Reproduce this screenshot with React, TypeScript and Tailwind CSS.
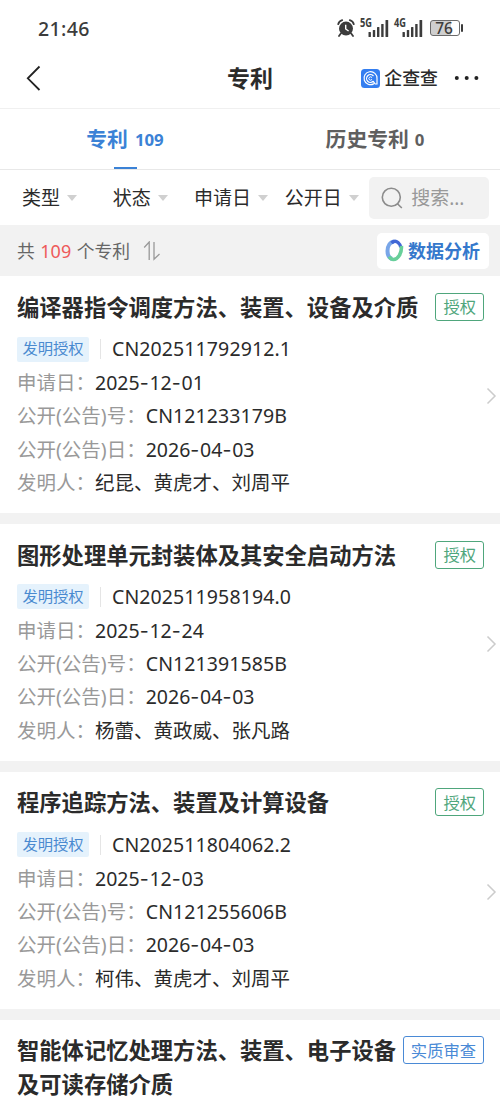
type Patent = {
  title: string
  status: string
  kind?: string
  applyNo?: string
  applyDate?: string
  publishNo?: string
  publishDate?: string
  inventors?: string
}

const FILTERS = ['类型', '状态', '申请日', '公开日']

const PATENTS: Patent[] = [
  {
    title: '编译器指令调度方法、装置、设备及介质',
    status: '授权',
    kind: '发明授权',
    applyNo: 'CN202511792912.1',
    applyDate: '2025-12-01',
    publishNo: 'CN121233179B',
    publishDate: '2026-04-03',
    inventors: '纪昆、黄虎才、刘周平',
  },
  {
    title: '图形处理单元封装体及其安全启动方法',
    status: '授权',
    kind: '发明授权',
    applyNo: 'CN202511958194.0',
    applyDate: '2025-12-24',
    publishNo: 'CN121391585B',
    publishDate: '2026-04-03',
    inventors: '杨蕾、黄政威、张凡路',
  },
  {
    title: '程序追踪方法、装置及计算设备',
    status: '授权',
    kind: '发明授权',
    applyNo: 'CN202511804062.2',
    applyDate: '2025-12-03',
    publishNo: 'CN121255606B',
    publishDate: '2026-04-03',
    inventors: '柯伟、黄虎才、刘周平',
  },
  {
    title: '智能体记忆处理方法、装置、电子设备及可读存储介质',
    status: '实质审查',
  },
]

function Signal({ label }: { label: string }) {
  return (
    <svg width="29" height="20" viewBox="0 0 29 20" fill="#3c3c3c" className="overflow-visible">
      <text x="0" y="9.3" fontSize="11.5" fontWeight="700" textLength="12" lengthAdjust="spacingAndGlyphs">
        {label}
      </text>
      <rect x="8.5" y="14" width="2.4" height="5" rx=".5" />
      <rect x="12.8" y="12" width="2.4" height="7" rx=".5" />
      <rect x="17" y="9" width="2.4" height="10" rx=".5" />
      <rect x="21.2" y="6" width="2.4" height="13" rx=".5" />
      <rect x="25.5" y="2" width="2.7" height="17" rx=".5" />
    </svg>
  )
}

function StatusBar() {
  return (
    <div className="flex h-14 items-center justify-between pl-[38px] pr-[37px] text-[#3c3c3c]">
      <span className="pt-[2px] text-[19.5px] font-medium tracking-[0.4px]">21:46</span>
      <div className="flex items-center">
        <svg width="18" height="18" viewBox="0 0 18 18" className="mr-[5px]">
          <circle cx="9" cy="9.6" r="7" fill="#3c3c3c" />
          <path d="M1.2 5.2 Q2 2 5.2 1.2M16.8 5.2Q16 2 12.8 1.2M3.8 14.5 2 17M14.2 14.5 16 17" fill="none" stroke="#3c3c3c" strokeWidth="1.8" strokeLinecap="round" />
          <path d="M8.7 5.8V10L11.6 12" fill="none" stroke="#fff" strokeWidth="1.4" />
        </svg>
        <div className="mr-[5px] flex"><Signal label="5G" /></div>
        <div className="mr-[7px] flex"><Signal label="4G" /></div>
        <div className="flex items-center gap-px">
          <div className="flex h-4 w-[30px] items-center justify-center rounded-[3px] border border-[#6a6a6a] bg-linear-to-r from-[#cfcfcf] from-70% to-white to-70% pr-[2px] text-[15.5px] font-medium leading-4">
            76
          </div>
          <div className="h-2 w-[2px] rounded-sm bg-[#3c3c3c]" />
        </div>
      </div>
    </div>
  )
}

function Header() {
  return (
    <header className="flex h-[53px] items-center border-b border-[#f0f0f0] pb-2 pl-[26px] pr-[21px]">
      <div className="flex flex-1">
        <svg width="16" height="26" viewBox="0 0 16 26" fill="none" stroke="#222" strokeWidth="1.8">
          <path d="M13.5 1.5 1.8 13.3 13.5 25" />
        </svg>
      </div>
      <h1 className="mr-[5px] pt-px text-[23px] font-bold leading-none">专利</h1>
      <div className="flex flex-1 items-center justify-end">
        <svg width="19" height="19" viewBox="0 0 19 19" className="mr-1">
          <rect width="19" height="19" rx="3.5" fill="#347ef0" />
          <g fill="none" stroke="#fff" strokeLinecap="round">
            <path d="M12.6 14.9A6.5 6.5 0 1 1 16 9.5V15H14.2L12.4 12.6" strokeWidth="1.2" />
            <path d="M12.2 6.7A3.9 3.9 0 1 0 12.2 12.3" strokeWidth="1.2" />
            <path d="M10.8 8.3A1.7 1.7 0 1 0 10.8 10.7" strokeWidth="1" />
          </g>
        </svg>
        <span className="pt-[2px] text-[17.9px] font-medium leading-none">企查查</span>
        <svg width="25" height="6" viewBox="0 0 25 6" fill="#222" className="ml-4">
          <circle cx="2.8" cy="3" r="2" />
          <circle cx="12.7" cy="3" r="2" />
          <circle cx="22.4" cy="3" r="2" />
        </svg>
      </div>
    </header>
  )
}

function Tabs() {
  return (
    <div className="flex h-[61px] border-b border-[#e8e8e8] font-bold">
      <div className="relative flex flex-1 items-center justify-center pt-[2px] text-[#3b82d6]">
        <p className="flex items-center text-[20.8px]">专利<span className="mb-px ml-[7px] text-[16.8px]">109</span></p>
        <span className="absolute bottom-0 h-[2.5px] w-[23px] bg-[#3b82d6]" />
      </div>
      <div className="flex flex-1 items-center justify-center pt-[2px] text-[#5f5f5f]">
        <p className="flex items-center text-[20.8px]">历史专利<span className="mb-px ml-[6px] text-[16.8px]">0</span></p>
      </div>
    </div>
  )
}

function FilterBar() {
  return (
    <div className="flex h-[55px] items-center pl-1 pr-[11px]">
      {FILTERS.map(name => (
        <button key={name} className="flex w-[90.8px] items-center justify-center gap-[7px] text-[19px]">
          <span className="pt-[2px]">{name}</span>
          <svg width="10" height="6" viewBox="0 0 10 6" fill="#d0d0d0">
            <path d="M0 0H10L5 6Z" />
          </svg>
        </button>
      ))}
      <div className="ml-[2px] flex h-[42px] flex-1 items-center rounded-[5px] bg-[#f2f2f2] pl-3 text-[19px] text-[#999]">
        <svg width="22" height="22" viewBox="0 0 22 22" fill="none" stroke="#8c8c8c" strokeWidth="1.6" className="mr-2">
          <circle cx="10.3" cy="10.3" r="9" />
          <path d="M16.5 16.8 20.8 21" />
        </svg>
        <span className="pt-[2px]">搜索...</span>
      </div>
    </div>
  )
}

function CountBar() {
  return (
    <div className="flex h-[51px] items-center bg-[#f2f2f2] pl-[17px] pr-[11px]">
      <p className="pt-px text-[17.8px] text-[#666]">
        共<span className="mx-[5.5px] text-[18px] text-[#ee5a5a]">109</span>个专利
      </p>
      <svg width="18" height="20" viewBox="0 0 18 20" fill="none" stroke="#999" strokeWidth="1.3" className="ml-[13px]">
        <path d="M1.2 6.5 6.2 1V19M11 1V18.3L16.5 13" />
      </svg>
      <button className="ml-auto flex h-9 w-28 items-center rounded-[5px] bg-white pl-2 text-[18px] font-bold text-[#3578cc]">
        <svg width="19" height="23" viewBox="0 0 19 23" fill="none" className="mr-1">
          <path d="M9 2.5C5 3 2.5 7 2.5 12c0 4 1.8 7 4.5 8" stroke="#79a6e8" strokeWidth="4" />
          <path d="M6.5 4C8.5 2 11 1.8 13 3.5c1.5 1.3 2.7 3 2.8 5" stroke="#4168d6" strokeWidth="3.4" />
          <path d="M16.4 7C17 14 13 20.5 8.5 20.5 6.5 20.5 5 19 4.3 17.5" stroke="#68cf9a" strokeWidth="3.6" />
        </svg>
        <span className="pt-px">数据分析</span>
      </button>
    </div>
  )
}

// the hyphen is set in Inter, whose dash is wider
function DateText({ value }: { value: string }) {
  return (
    <>
      {value.split('-').map((part, i) => (
        <span key={i}>
          {i > 0 && <span className="font-[Inter] tracking-[0.8px]">-</span>}
          {part}
        </span>
      ))}
    </>
  )
}

function PatentCard({ patent }: { patent: Patent }) {
  const granted = patent.status === '授权'
  return (
    <article className="relative bg-white pb-[13.6px] pl-[17px] pr-4 pt-[14.6px]">
      <div className="flex h-[33.4px] items-start justify-between">
        <h2 className="-mr-6 w-[402px] text-[22.3px] font-bold leading-[33.4px]">
          {granted ? patent.title : <span className="block w-[382px]">{patent.title}</span>}
        </h2>
        <span
          className={`mt-[2px] flex h-7 shrink-0 items-center rounded-[3px] border px-[7px] pt-px text-[16.3px] ${
            granted ? 'border-[#4fa67c] text-[#4fa67c]' : 'border-[#4a8ad6] text-[#4a8ad6]'
          }`}
        >
          {patent.status}
        </span>
      </div>
      {patent.applyNo && (
        <div className="mt-[8.4px] grid auto-rows-[33.4px] text-[19.5px] leading-[33.4px]">
          <div className="flex items-center tracking-[0.1px]">
            <span className="flex h-[25px] w-[72px] items-center justify-center rounded-[2px] bg-[#e5f2fc] text-[15.3px] tracking-normal text-[#4a8ad0]">
              {patent.kind}
            </span>
            <span className="ml-[11px] mr-[11px] h-5 w-px bg-[#e5e5e5]" />
            {patent.applyNo}
          </div>
          <p><span className="text-[#999]">申请日：</span><DateText value={patent.applyDate!} /></p>
          <p><span className="text-[#999]">公开(公告)号：</span><span className="tracking-[0.1px]">{patent.publishNo}</span></p>
          <p><span className="text-[#999]">公开(公告)日：</span><DateText value={patent.publishDate!} /></p>
          <p><span className="text-[#999]">发明人：</span>{patent.inventors}</p>
          <svg width="11" height="18" viewBox="0 0 11 18" fill="none" stroke="#ccc" strokeWidth="1.5" className="absolute right-[3px] top-[111px]">
            <path d="M1.5 1.5 9 9 1.5 16.5" />
          </svg>
        </div>
      )}
    </article>
  )
}

export default function App() {
  return (
    <div className="h-[1099px] w-[500px] overflow-hidden bg-white font-['Noto_Sans','Noto_Sans_CJK_SC',sans-serif] text-[#2b2b2b]">
      <StatusBar />
      <Header />
      <Tabs />
      <FilterBar />
      <CountBar />
      <main className="flex flex-col gap-[11px] bg-[#f2f2f2]">
        {PATENTS.map(patent => (
          <PatentCard key={patent.title} patent={patent} />
        ))}
      </main>
    </div>
  )
}
